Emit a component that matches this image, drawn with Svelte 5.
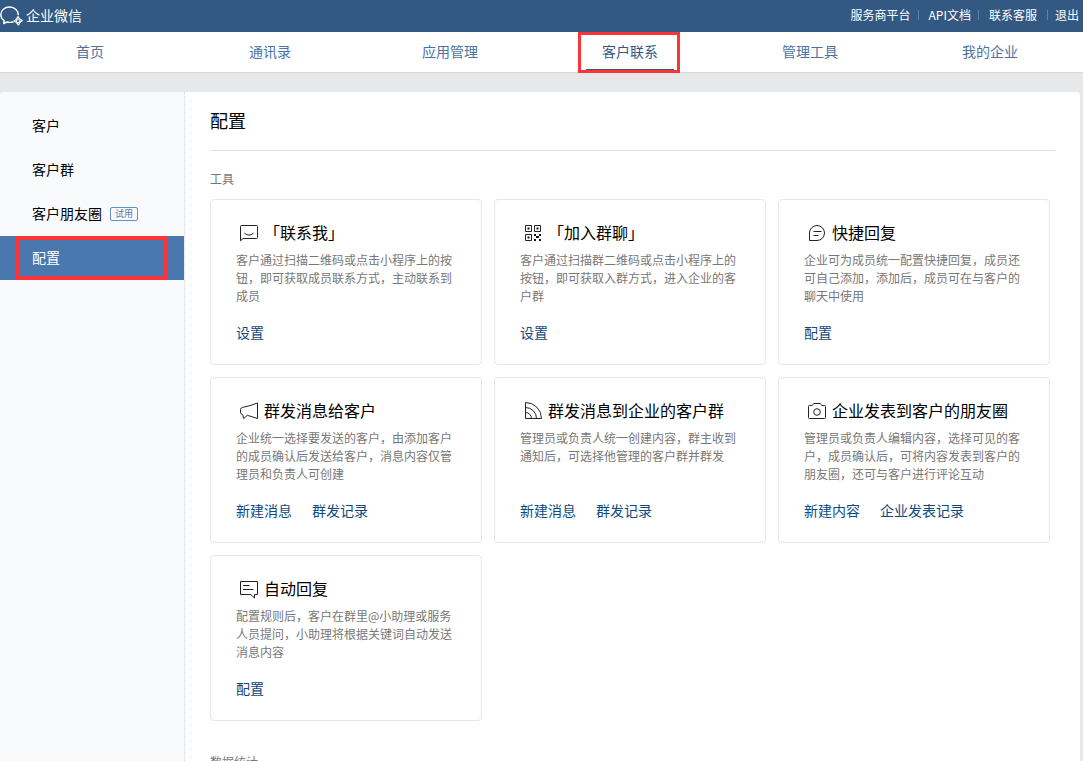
<div class="page" lang="zh-CN">
  <header class="topbar">
    <a class="logo" href="#home">
      <svg width="24" height="24" viewBox="0 0 24 24" fill="none" stroke="#fff" stroke-width="1.4" stroke-linejoin="round">
        <path d="M18.3 11.3C18.6 6.6 14.7 3 9.6 3C4.6 3 .8 6.3 .8 10.6C.8 13.2 2.1 15.2 4.1 16.6L3.6 19.6L6.8 18C9 18.6 11.5 18.5 13.6 17.6" />
        <path stroke-width="1.1" d="M18.2 12.6C18.4 13.7 18.9 14.2 19.8 14.7C19 15.6 17.5 15.4 16.9 14.4C17 13.6 17.5 13 18.2 12.6ZM22.4 16.8C21.3 17 20.8 17.5 20.3 18.4C19.4 17.6 19.6 16.1 20.6 15.5C21.4 15.6 22 16.1 22.4 16.8ZM18.2 21C18 19.9 17.5 19.4 16.6 18.9C17.4 18 18.9 18.2 19.5 19.2C19.4 20 18.9 20.6 18.2 21ZM14 16.8C15.1 16.6 15.6 16.1 16.1 15.2C17 16 16.8 17.5 15.8 18.1C15 18 14.4 17.5 14 16.8Z" />
      </svg>
      <span>企业微信</span>
    </a>
    <div class="top-links">
      {#each topLinks as link}
        <a href="#top">{link}</a>
      {/each}
    </div>
    <a class="logout" href="#logout">退出</a>
  </header>

  <nav class="main-nav">
    {#each navItems as item}
      <a href="#nav" class:current={item === currentNav}>
        <span>{item}</span>
        {#if item === currentNav}
          <i class="mark nav-mark"></i>
        {/if}
      </a>
    {/each}
  </nav>

  <div class="panel">
    <aside class="sidebar">
      {#each menu as item}
        <a href="#menu" class:active={item.name === currentMenu}>
          {item.name}
          {#if item.tag}
            <span class="tag">{item.tag}</span>
          {/if}
          {#if item.name === currentMenu}
            <i class="mark menu-mark"></i>
          {/if}
        </a>
      {/each}
    </aside>

    <main class="content">
      <h1>配置</h1>

      <h2>工具</h2>
      <div class="cards">
        {#each tools as tool}
          <section class="card">
            <h3>
              <svg width="24" height="24" viewBox="0 0 24 24" fill="none" stroke="#222">
                <path d={icons[tool.icon].line} />
                {#if icons[tool.icon].solid}
                  <path d={icons[tool.icon].solid} fill="#111" stroke="none" />
                {/if}
              </svg>
              {tool.title}
            </h3>
            <p>{tool.text}</p>
            <div class="actions">
              {#each tool.actions as action}
                <a href="#action">{action}</a>
              {/each}
            </div>
          </section>
        {/each}
      </div>

      <h2>数据统计</h2>
    </main>
  </div>
</div>

<script>
  const topLinks = ['服务商平台', 'API文档', '联系客服'];
  const navItems = ['首页', '通讯录', '应用管理', '客户联系', '管理工具', '我的企业'];
  const menu = [
    { name: '客户' },
    { name: '客户群' },
    { name: '客户朋友圈', tag: '试用' },
    { name: '配置' }
  ];

  let currentNav = '客户联系';
  let currentMenu = '配置';

  const icons = {
    smile: {
      line: 'M4.5 20.8V6.5Q4.5 5.5 5.5 5.5H20.5Q21.5 5.5 21.5 6.5V17.5Q21.5 18.5 20.5 18.5H7.2ZM8.5 13.2Q13 17 17.5 13.2'
    },
    qrcode: {
      line: 'M5.5 5.5H11.5V11.5H5.5ZM14.5 5.5H20.5V11.5H14.5ZM5.5 14.5H11.5V20.5H5.5Z',
      solid: 'M7.5 7.5h2v2h-2zM16.5 7.5h2v2h-2zM7.5 16.5h2v2h-2zM14 14h2v2h-2zM19 14h2v2h-2zM16 16h3v2h-3zM14 19h2v2h-2zM19 19h2v2h-2z'
    },
    reply: {
      line: 'M5.5 20.5V13A7.5 7.5 0 1 1 13 20.5ZM9.5 11.5H17.5M9.5 15.5H14.5'
    },
    horn: {
      line: 'M21.5 5V20.5L11.3 17.3L7.7 20.6L6.7 16.7Q4.5 16.2 4.5 14V11.5Q4.5 9.8 6.5 9.4Q14 8 21.5 5Z'
    },
    feed: {
      line: 'M5.5 4.5V20.5H21.5A16 16 0 0 0 5.5 4.5ZM5.5 9.5A11 11 0 0 1 16.5 20.5M5.5 14.5A6 6 0 0 1 11.5 20.5'
    },
    camera: {
      line: 'M5.5 7.5H8.2L9.7 5.5H16.3L17.8 7.5H20.5Q21.5 7.5 21.5 8.5V19.5Q21.5 20.5 20.5 20.5H5.5Q4.5 20.5 4.5 19.5V8.5Q4.5 7.5 5.5 7.5ZM16.3 14A3.3 3.3 0 1 1 9.7 14A3.3 3.3 0 1 1 16.3 14'
    },
    auto: {
      line: 'M4.5 5.5H21.5V18.5H18.5V22L14.8 18.5H4.5ZM7 9.5H13.5M7 13.5H17.5'
    }
  };

  const tools = [
    {
      icon: 'smile',
      title: '「联系我」',
      text: '客户通过扫描二维码或点击小程序上的按钮，即可获取成员联系方式，主动联系到成员',
      actions: ['设置']
    },
    {
      icon: 'qrcode',
      title: '「加入群聊」',
      text: '客户通过扫描群二维码或点击小程序上的按钮，即可获取入群方式，进入企业的客户群',
      actions: ['设置']
    },
    {
      icon: 'reply',
      title: '快捷回复',
      text: '企业可为成员统一配置快捷回复，成员还可自己添加，添加后，成员可在与客户的聊天中使用',
      actions: ['配置']
    },
    {
      icon: 'horn',
      title: '群发消息给客户',
      text: '企业统一选择要发送的客户，由添加客户的成员确认后发送给客户，消息内容仅管理员和负责人可创建',
      actions: ['新建消息', '群发记录']
    },
    {
      icon: 'feed',
      title: '群发消息到企业的客户群',
      text: '管理员或负责人统一创建内容，群主收到通知后，可选择他管理的客户群并群发',
      actions: ['新建消息', '群发记录']
    },
    {
      icon: 'camera',
      title: '企业发表到客户的朋友圈',
      text: '管理员或负责人编辑内容，选择可见的客户，成员确认后，可将内容发表到客户的朋友圈，还可与客户进行评论互动',
      actions: ['新建内容', '企业发表记录']
    },
    {
      icon: 'auto',
      title: '自动回复',
      text: '配置规则后，客户在群里@小助理或服务人员提问，小助理将根据关键词自动发送消息内容',
      actions: ['配置']
    }
  ];
</script>

<style>
  .page {
    display: flex;
    flex-direction: column;
    height: 100vh;
    overflow: hidden;
    background: #e7e8ea;
    color: #000;
    font-family: "Noto Sans CJK SC", sans-serif;
    font-size: 14px;
  }

  a {
    color: inherit;
    text-decoration: none;
  }

  h1, h2, h3, p {
    margin: 0;
    font-weight: normal;
  }

  .topbar {
    flex: none;
    display: flex;
    align-items: center;
    box-sizing: border-box;
    height: 32px;
    padding: 0 4px 2px 0;
    background: #335882;
    color: #fff;
    font-size: 12px;
    line-height: 16px;
  }

  .logo {
    display: flex;
    align-items: center;
    gap: 2px;
    margin-right: auto;
    font-size: 14px;
  }

  .logo svg {
    margin-top: 2px;
  }

  .top-links {
    display: flex;
  }

  .top-links a + a,
  .logout {
    display: flex;
    align-items: center;
  }

  .top-links a + a::before,
  .logout::before {
    content: '';
    width: 1px;
    height: 10px;
    margin: 0 10px 0 7px;
    background: #5b83b0;
  }

  .logout::before {
    margin: 0 7px 0 10px;
  }

  .main-nav {
    flex: none;
    display: grid;
    grid-template-columns: repeat(6, 1fr);
    padding-right: 3px;
    background: #fff;
    border-bottom: 1px solid #d6d8da;
    color: #4a73a3;
    line-height: 38px;
    text-align: center;
  }

  .main-nav a {
    position: relative;
    height: 40px;
  }

  .main-nav .current {
    color: #335882;
  }

  .current span {
    display: block;
    width: 88px;
    height: 37px;
    margin: 0 auto;
    border-bottom: 2px solid #335882;
  }

  /* red highlight frames */
  .mark {
    position: absolute;
    box-sizing: border-box;
    border: 3px solid #fb3438;
  }

  .nav-mark {
    top: 0;
    bottom: -1px;
    left: 38px;
    right: 40px;
  }

  .menu-mark {
    top: 0;
    bottom: 0;
    left: 16px;
    right: 16px;
    border-width: 4px;
  }

  .panel {
    flex: 1;
    display: flex;
    min-height: 0;
    margin: 19px 3px 0 0;
    overflow: hidden;
    background: #fff;
    border-radius: 4px 4px 0 0;
  }

  .sidebar {
    flex: none;
    width: 184px;
    padding-top: 12px;
    background: #f9fafc;
    border-right: 1px dotted #d3d7dc;
  }

  .sidebar a {
    position: relative;
    display: flex;
    align-items: center;
    gap: 8px;
    box-sizing: border-box;
    height: 44px;
    padding: 0 0 2px 32px;
  }

  .sidebar .active {
    background: #4a78ae;
    color: #fff;
  }

  .tag {
    box-sizing: border-box;
    width: 28px;
    height: 14px;
    margin-top: 2px;
    border: 1px solid #5d92cc;
    border-radius: 2px;
    color: #4a78ae;
    font-size: 9px;
    line-height: 12px;
    text-align: center;
  }

  .content {
    flex: 1;
    padding: 0 25px;
  }

  h1 {
    padding-bottom: 2px;
    border-bottom: 1px solid #dddfe2;
    font-size: 18px;
    line-height: 56px;
  }

  h2 {
    margin: 19px 0 11px;
    color: #787878;
    font-size: 12px;
    line-height: 18px;
  }

  .cards {
    display: grid;
    grid-template-columns: repeat(auto-fill, 272px);
    gap: 12px;
  }

  .cards + h2 {
    margin-top: 32px;
  }

  .card {
    padding: 20px 25px 22px;
    border: 1px solid #e4e6e9;
    border-radius: 4px;
  }

  h3 {
    display: flex;
    align-items: center;
    gap: 4px;
    font-size: 16px;
    line-height: 24px;
  }

  .card p {
    min-height: 54px;
    margin: 7px 0 17px;
    color: #787878;
    font-size: 12px;
    line-height: 18px;
  }

  .actions {
    display: flex;
    gap: 20px;
    color: #0d4a80;
    line-height: 20px;
  }
</style>
